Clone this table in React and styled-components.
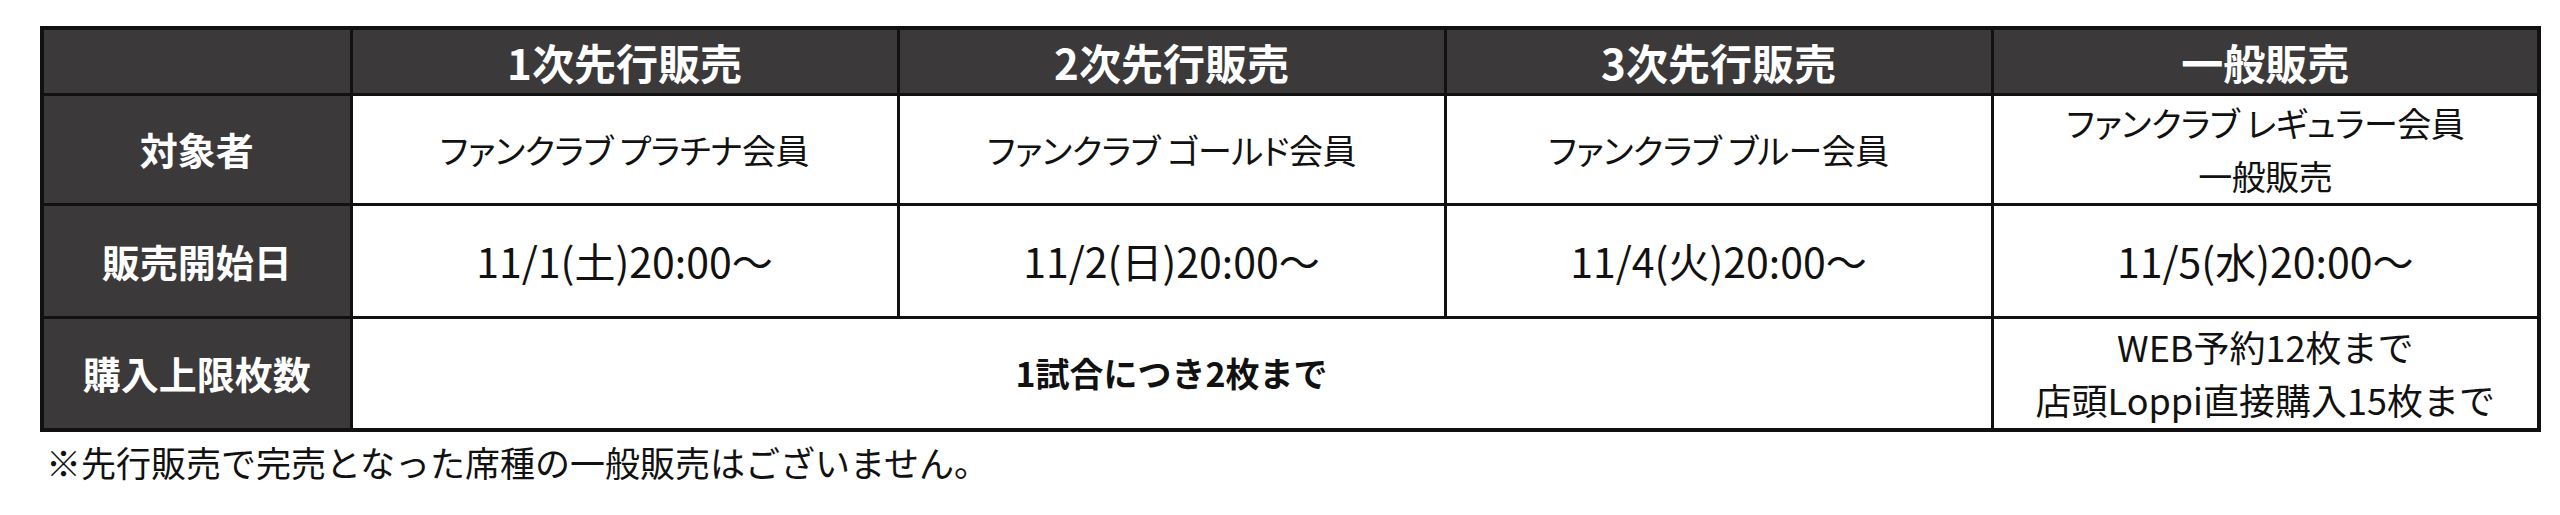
import React from "react";
import styled, { createGlobalStyle } from "styled-components";

const GlobalStyle = createGlobalStyle`
  html, body {
    margin: 0;
    padding: 0;
    background: #fff;
  }
  body {
    font-family: "Noto Sans CJK JP", "Noto Sans", sans-serif;
    color: #111;
  }
`;

const columns = [
  {
    title: "1次先行販売",
    target: ["ファンクラブ プラチナ会員"],
    date: "11/1(土)20:00～",
  },
  {
    title: "2次先行販売",
    target: ["ファンクラブ ゴールド会員"],
    date: "11/2(日)20:00～",
  },
  {
    title: "3次先行販売",
    target: ["ファンクラブ ブルー会員"],
    date: "11/4(火)20:00～",
  },
  {
    title: "一般販売",
    target: ["ファンクラブ レギュラー会員", "一般販売"],
    date: "11/5(水)20:00～",
  },
];

const App = () => {
  return (
    <>
      <GlobalStyle />
      <Page>
        <SaleTable>
          <colgroup>
            <col style={{ width: 309 }} />
            {columns.map((c) => (
              <col key={c.title} style={{ width: 547 }} />
            ))}
          </colgroup>
          <thead>
            <Row $h={66}>
              <HeadCell />
              {columns.map((c) => (
                <HeadCell key={c.title}>{c.title}</HeadCell>
              ))}
            </Row>
          </thead>
          <tbody>
            <Row $h={110}>
              <LabelCell>対象者</LabelCell>
              {columns.map((c) => (
                <BodyCell key={c.title}>
                  {c.target.map((line) => (
                    <Line key={line}>{line}</Line>
                  ))}
                </BodyCell>
              ))}
            </Row>
            <Row $h={113}>
              <LabelCell>販売開始日</LabelCell>
              {columns.map((c) => (
                <DateCell key={c.title}>{c.date}</DateCell>
              ))}
            </Row>
            <Row $h={113}>
              <LabelCell>購入上限枚数</LabelCell>
              <LimitCell colSpan={3}>1試合につき2枚まで</LimitCell>
              <BodyCell $plain>
                <Line>WEB予約12枚まで</Line>
                <Line>店頭Loppi直接購入15枚まで</Line>
              </BodyCell>
            </Row>
          </tbody>
        </SaleTable>
        <Note>※先行販売で完売となった席種の一般販売はございません。</Note>
      </Page>
    </>
  );
};

const Page = styled.div`
  padding: 26px 0 0 40px;
`;

const SaleTable = styled.table`
  width: 2499px;
  table-layout: fixed;
  border-collapse: collapse;
  border: 4px solid #111;

  & td,
  & th {
    border: 3px solid #111;
    padding: 0;
    text-align: center;
    vertical-align: middle;
  }
`;

const Row = styled.tr`
  height: ${(p) => p.$h}px;
`;

const HeadCell = styled.th`
  background: #3b393a;
  color: #fff;
  font-size: 42px;
  font-weight: 700;
  line-height: 1;
  padding-top: 2px !important;
`;

const LabelCell = styled.td`
  background: #3b393a;
  color: #fff;
  font-size: 38px;
  font-weight: 700;
  line-height: 1;
`;

const BodyCell = styled.td`
  background: #fff;
  font-weight: 400;
  font-size: ${(p) => (p.$plain ? "36px" : "34px")};
  line-height: 53px;
  letter-spacing: ${(p) => (p.$plain ? "0" : "-0.5px")};
  font-feature-settings: ${(p) => (p.$plain ? "normal" : '"palt"')};
`;

const Line = styled.div`
  white-space: nowrap;
`;

const DateCell = styled.td`
  background: #fff;
  font-size: 41px;
  font-weight: 400;
  line-height: 1;
`;

const LimitCell = styled.td`
  background: #fff;
  font-size: 34px;
  font-weight: 700;
  line-height: 1;
`;

const Note = styled.p`
  margin: 6px 0 0 6px;
  font-size: 35px;
  line-height: 48px;
  color: #111;
`;

export default App;
